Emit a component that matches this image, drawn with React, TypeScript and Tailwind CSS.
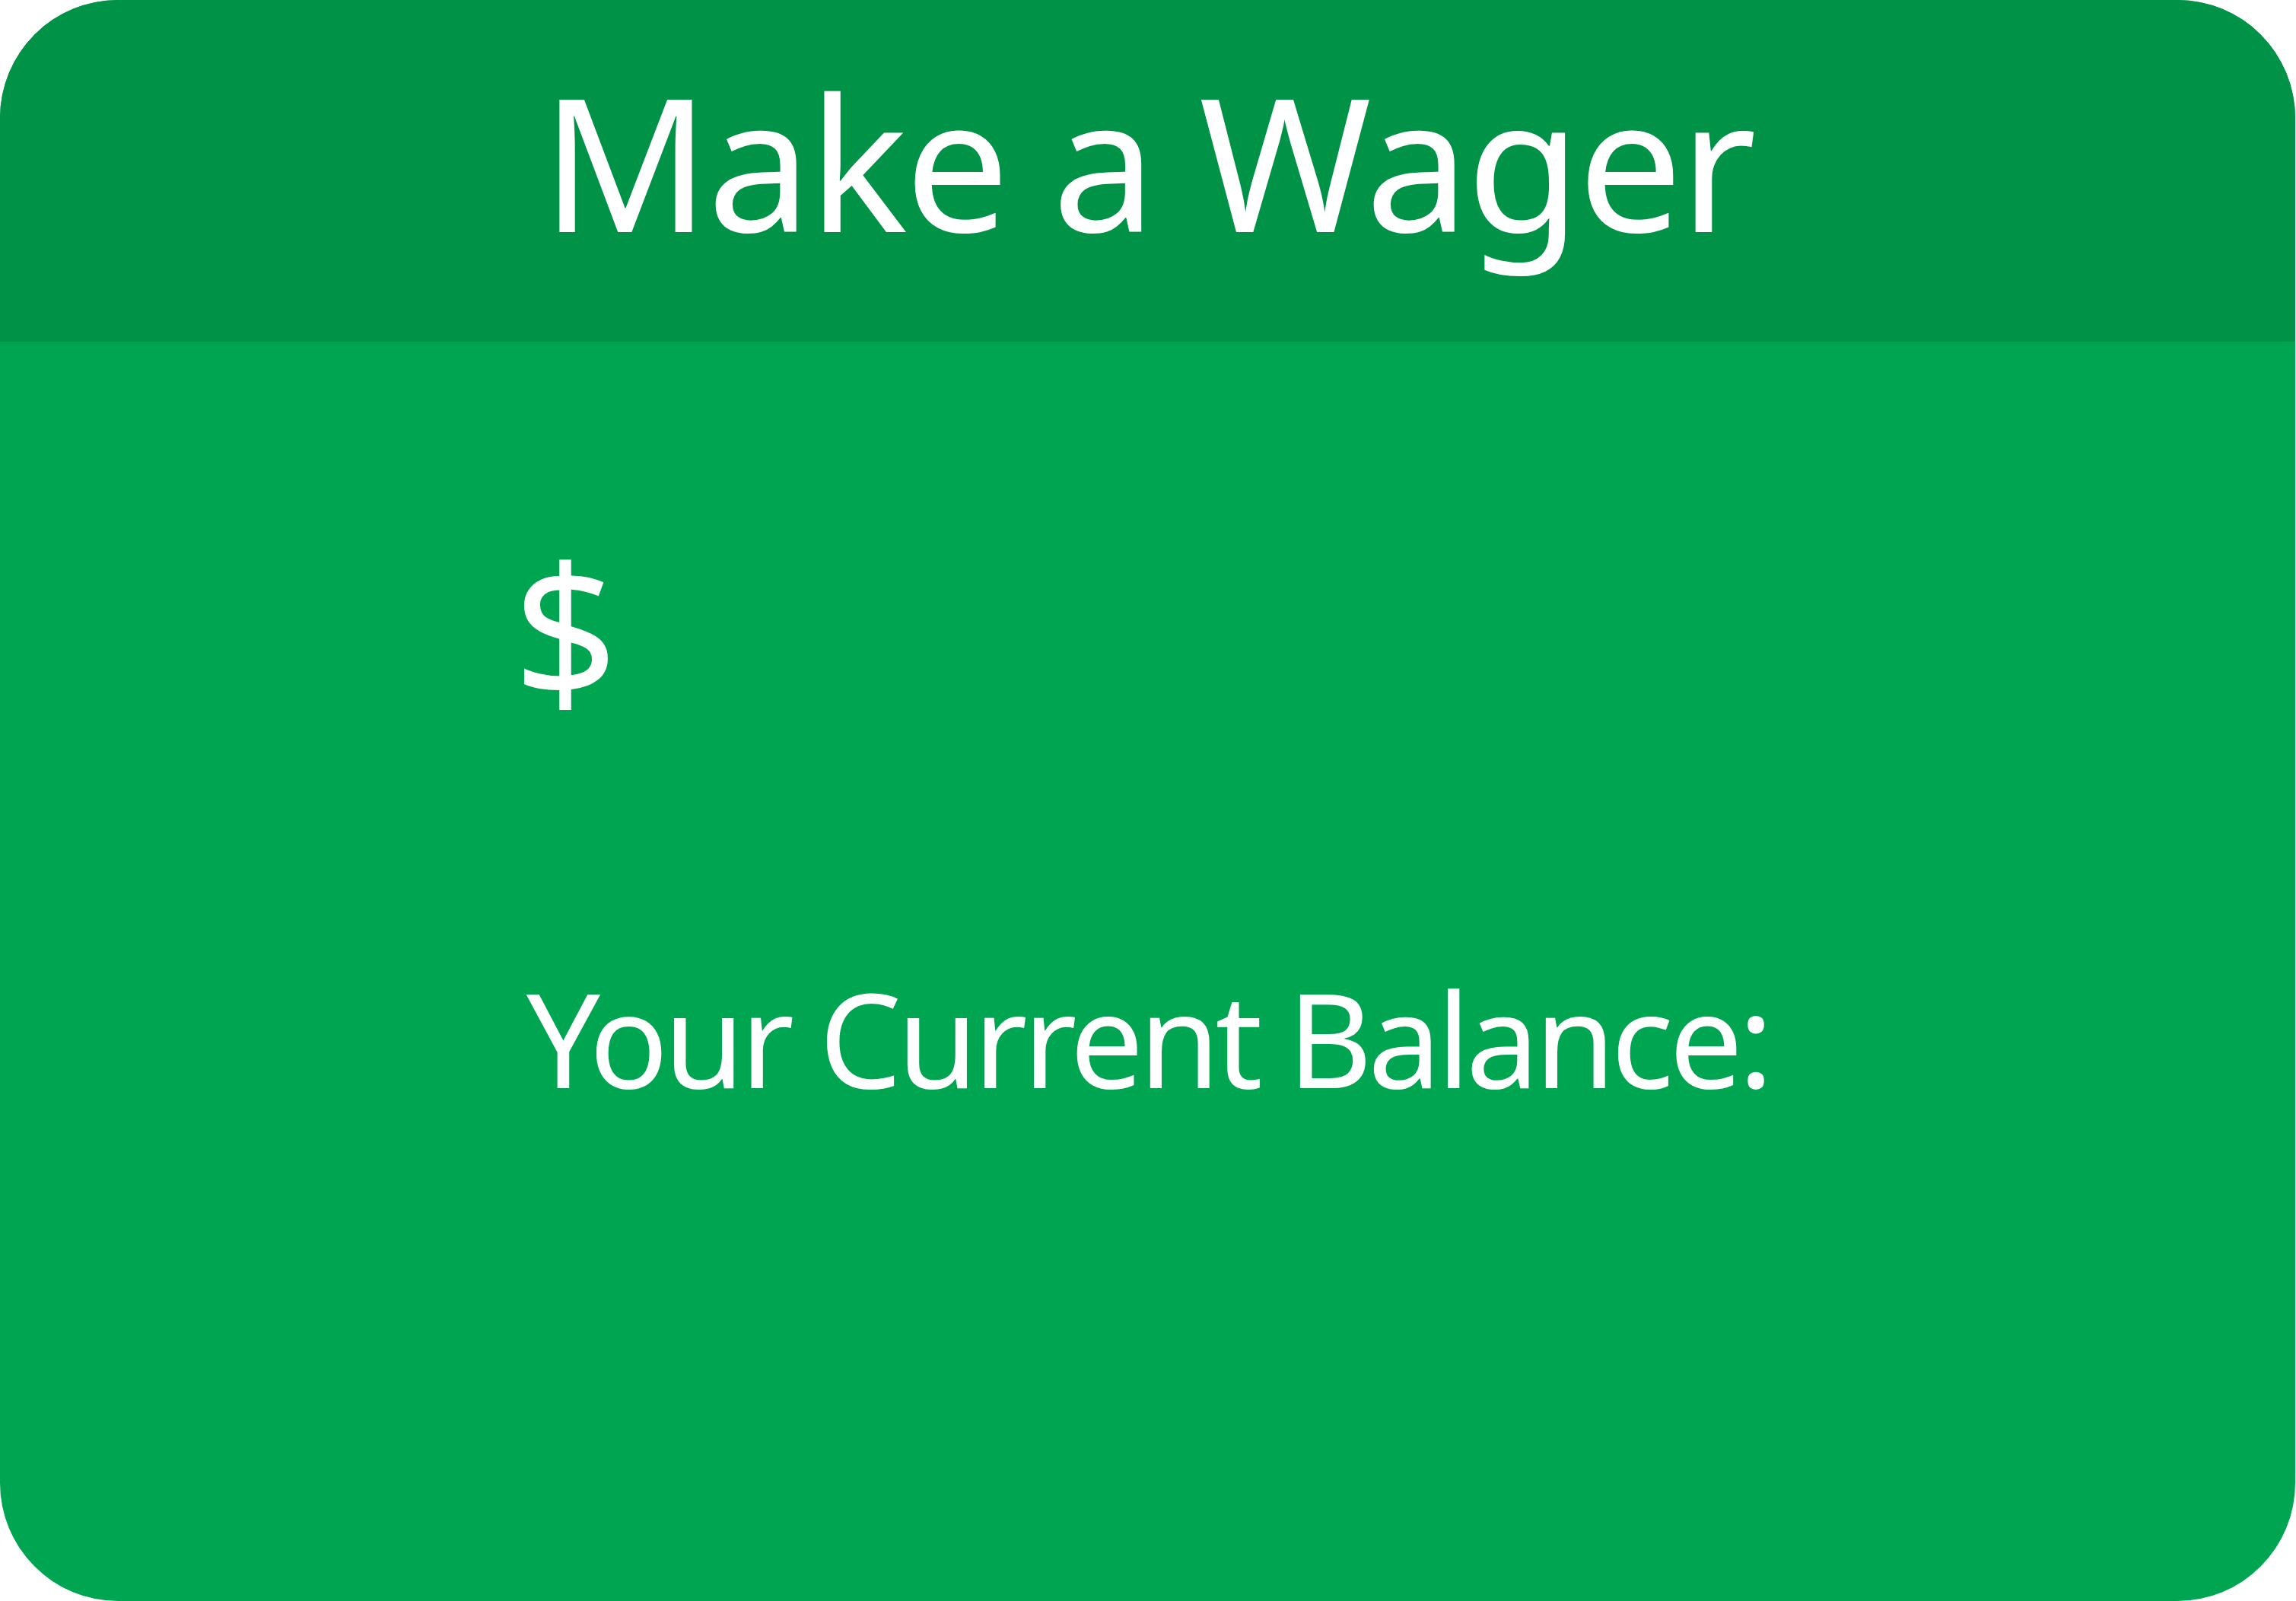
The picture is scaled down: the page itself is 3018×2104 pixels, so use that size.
import React from 'react';

export default function App() {
    return (
        <div className="w-[3017px] h-[2104px] bg-white">
            <div
                className="flex h-full w-full flex-col overflow-hidden rounded-[155px] bg-[#00a552] text-white"
                style={{ fontFamily: '"Noto Sans", "Open Sans", sans-serif' }}
            >
                {/* Header */}
                <div className="flex h-[449px] shrink-0 items-center justify-center bg-[#009348] pb-[30px]">
                    <h1 className="text-[244px] leading-none font-normal tracking-[-0.015em]">Make a Wager</h1>
                </div>

                {/* Wager amount */}
                <div className="mt-[255px] flex items-start pl-[674px]">
                    <span className="text-[242px] leading-none">$</span>
                    <input
                        className="ml-8 h-[242px] flex-1 bg-transparent text-[205px] leading-none text-white outline-none"
                        aria-label="Wager amount"
                    />
                </div>

                {/* Balance */}
                <div className="mt-[331px] flex justify-center">
                    <p className="text-[172px] leading-none font-normal tracking-[-0.035em]">Your Current Balance:</p>
                </div>
            </div>
        </div>
    );
}
